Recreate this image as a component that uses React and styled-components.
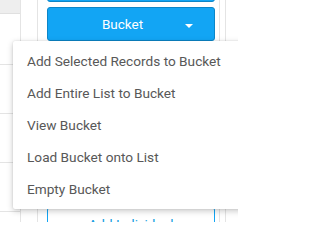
import React from "react";
import styled, { createGlobalStyle } from "styled-components";

const Global = createGlobalStyle`
  html, body { margin: 0; padding: 0; background: #fff; }
  body { font-family: Roboto, "Liberation Sans", Arial, sans-serif; }
`;

const Page = styled.div`
  position: relative;
  width: 238px;
  height: 222px;
  overflow: hidden;
  display: flex;
  background: #fff;
`;

const TableCol = styled.div`
  width: ${(p) => p.$w}px;
  flex: none;
  border-right: 1px solid #e4e4e4;
  display: flex;
  flex-direction: column;
`;

const HeadCell = styled.div`
  height: 13px;
  background: #eeeeee;
  border-bottom: 1px solid #e0e0e0;
`;

const Cell = styled.div`
  height: ${(p) => p.$h}px;
  flex: none;
  border-bottom: 1px solid #e4e4e4;
`;

const Side = styled.div`
  width: 168px;
  flex: none;
  margin-left: 9px;
  margin-top: -32px;
  display: flex;
  flex-direction: column;
`;

const Button = styled.div`
  box-sizing: border-box;
  height: 34px;
  flex: none;
  border-radius: 3px;
  display: flex;
  align-items: center;
  justify-content: center;
  position: relative;
  font-size: 13.5px;
  padding-right: ${(p) => (p.$caret ? 17 : 0)}px;
  background: ${(p) => (p.$outline ? "#fff" : "#12a5f4")};
  color: ${(p) => (p.$outline ? "#0f9be0" : "#fff")};
  border: 1px solid ${(p) => (p.$outline ? "#12a5f4" : "#0c86c8")};
  margin-top: ${(p) => p.$mt || 0}px;
`;

const Caret = styled.span`
  position: absolute;
  right: 21px;
  top: 16px;
  width: 0;
  height: 0;
  border-left: 4px solid transparent;
  border-right: 4px solid transparent;
  border-top: 4px solid #fff;
`;

const Rail = styled.div`
  width: ${(p) => p.$w}px;
  flex: none;
  border-right: 1px solid #e4e4e4;
`;

const Menu = styled.ul`
  position: absolute;
  left: 13px;
  top: 41px;
  width: 240px;
  margin: 0;
  padding: 4px 0;
  list-style: none;
  background: #fff;
  box-shadow: 0 2px 6px rgba(0, 0, 0, 0.22), 0 0 2px rgba(0, 0, 0, 0.12);
  border-radius: 2px;
`;

const Item = styled.li`
  height: 32px;
  display: flex;
  align-items: center;
  padding-left: 14px;
  font-size: 13.65px;
  color: #585858;
  white-space: nowrap;
`;

const items = [
  "Add Selected Records to Bucket",
  "Add Entire List to Bucket",
  "View Bucket",
  "Load Bucket onto List",
  "Empty Bucket",
];

export default function App() {
  return (
    <>
      <Global />
      <Page>
        <TableCol $w={20}>
          <HeadCell />
          <Cell $h={50} />
          <Cell $h={48} />
          <Cell $h={48} />
          <Cell $h={48} />
        </TableCol>
        <TableCol $w={16} />
        <Side>
          <Button>Search</Button>
          <Button $mt={5} $caret>
            Bucket
            <Caret />
          </Button>
          <Button $outline $mt={166}>Add Individual</Button>
        </Side>
        <Rail $w={4} />
        <Rail $w={5} />
        <Menu>
          {items.map((t) => (
            <Item key={t}>{t}</Item>
          ))}
        </Menu>
      </Page>
    </>
  );
}
